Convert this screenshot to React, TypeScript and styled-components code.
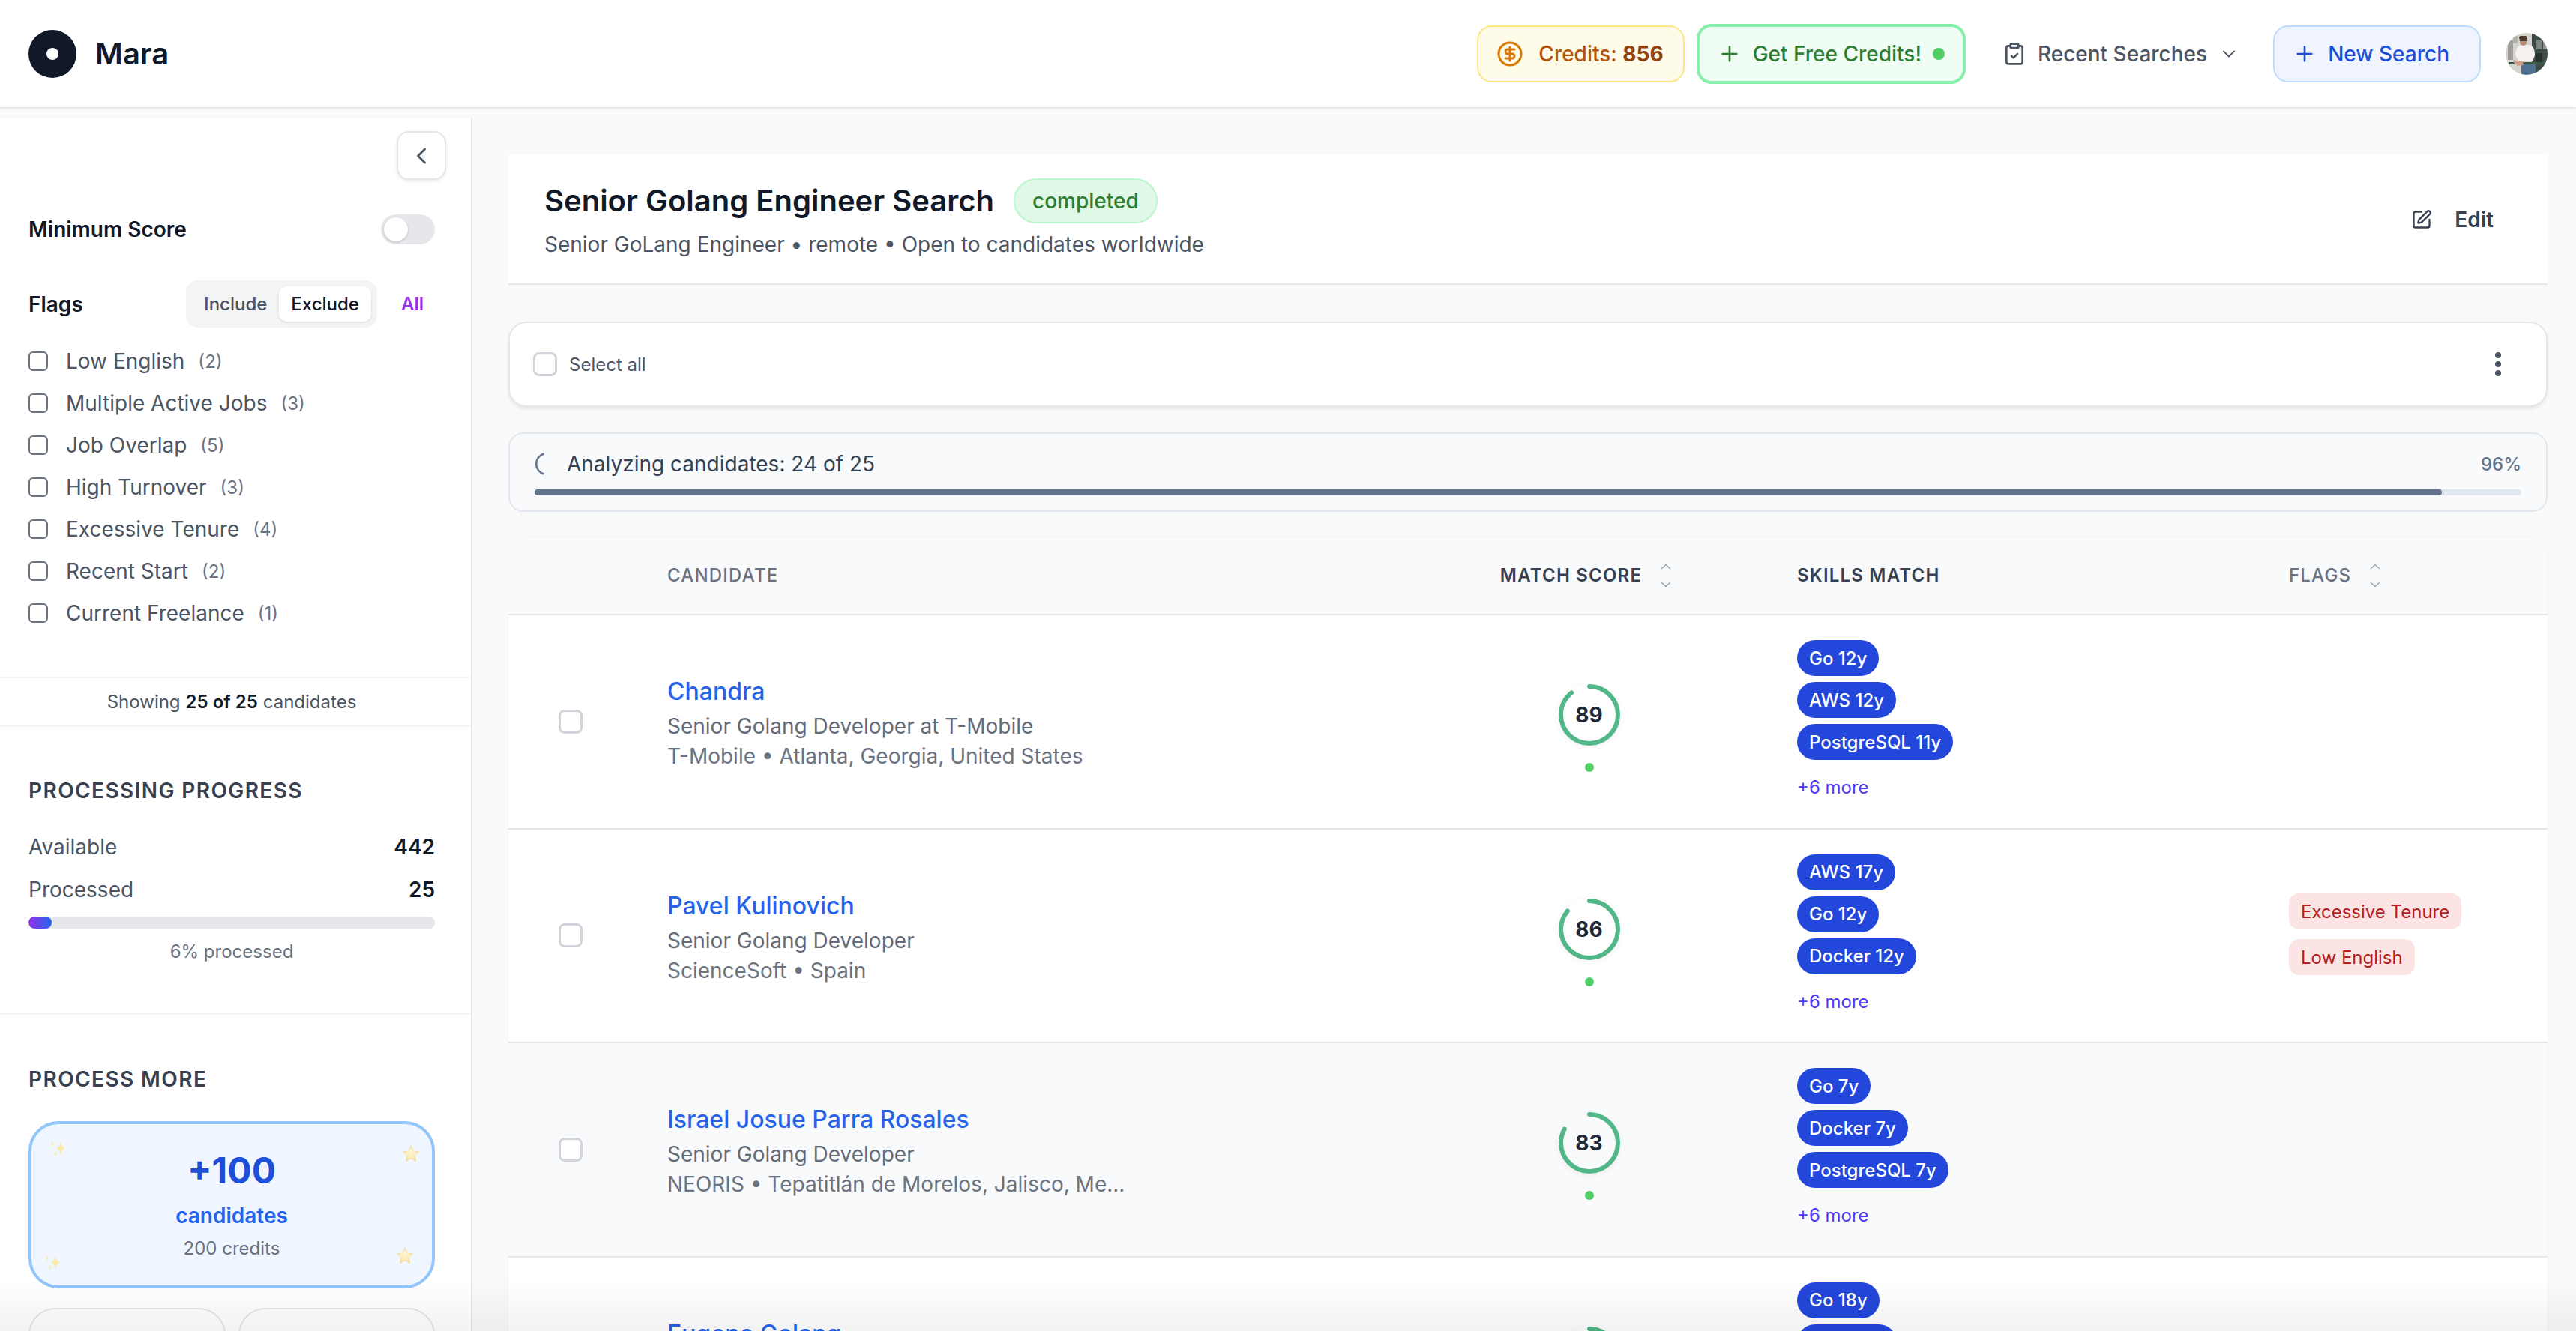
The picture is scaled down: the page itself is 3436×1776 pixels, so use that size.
import styled, { createGlobalStyle } from 'styled-components';
import { ChevronDown, ChevronLeft, CircleDollarSign, ClipboardCheck, Plus, SquarePen } from 'lucide-react';

const flagOptions = [
  { label: 'Low English', count: 2 },
  { label: 'Multiple Active Jobs', count: 3 },
  { label: 'Job Overlap', count: 5 },
  { label: 'High Turnover', count: 3 },
  { label: 'Excessive Tenure', count: 4 },
  { label: 'Recent Start', count: 2 },
  { label: 'Current Freelance', count: 1 },
];

const candidates = [
  {
    name: 'Chandra',
    role: 'Senior Golang Developer at T-Mobile',
    place: 'T-Mobile • Atlanta, Georgia, United States',
    score: 89,
    skills: ['Go 12y', 'AWS 12y', 'PostgreSQL 11y'],
    flags: [] as string[],
  },
  {
    name: 'Pavel Kulinovich',
    role: 'Senior Golang Developer',
    place: 'ScienceSoft • Spain',
    score: 86,
    skills: ['AWS 17y', 'Go 12y', 'Docker 12y'],
    flags: ['Excessive Tenure', 'Low English'],
  },
  {
    name: 'Israel Josue Parra Rosales',
    role: 'Senior Golang Developer',
    place: 'NEORIS • Tepatitlán de Morelos, Jalisco, Me...',
    score: 83,
    skills: ['Go 7y', 'Docker 7y', 'PostgreSQL 7y'],
    flags: [],
  },
  {
    name: 'Eugene Golang',
    role: 'Senior Golang Developer',
    place: 'Remote',
    score: 81,
    skills: ['Go 18y', 'AWS 14y', 'Docker 10y'],
    flags: [],
  },
];

function SortIcon() {
  return (
    <svg width="14" height="32" viewBox="0 0 14 32" fill="none" stroke="#9ca3af" strokeWidth="1.6" strokeLinecap="round" strokeLinejoin="round">
      <path d="M1.5 6.5 7 1.5l5.5 5" />
      <path d="M1.5 25.5 7 30.5l5.5-5" />
    </svg>
  );
}

function ScoreRing({ score }: { score: number }) {
  const radius = 38;
  const length = 2 * Math.PI * radius;
  return (
    <RingBox>
      <svg width="82" height="82" viewBox="0 0 82 82" fill="none">
        <circle
          cx="41"
          cy="41"
          r={radius}
          stroke="#52b788"
          strokeWidth="6"
          strokeLinecap="round"
          strokeDasharray={`${(length * score) / 100} ${length}`}
          transform="rotate(-90 41 41)"
        />
      </svg>
      <RingValue>{score}</RingValue>
    </RingBox>
  );
}

function Sparkles({ className }: { className?: string }) {
  return (
    <svg className={className} width="21" height="22" viewBox="0 0 21 22" fill="#fbe9a8">
      <path d="M14 .5c.6 6 2 8.800 6.500 10-4.500 1.200-5.900 4-6.500 10-.6-6-2-8.800-6.500-10 4.500-1.200 5.900-4 6.500-10Z" />
      <path d="M3 .5c.3 2.800.9 3.900 2.300 4.500C3.900 5.600 3.300 6.700 3 9.500 2.700 6.700 2.100 5.600.7 5 2.100 4.400 2.700 3.300 3 .5Z" />
      <path d="M7 12.500c.3 2.800.9 3.900 2.300 4.500-1.400.6-2 1.700-2.300 4.500-.3-2.800-.9-3.900-2.300-4.500 1.400-.6 2-1.700 2.300-4.500Z" />
    </svg>
  );
}

function Star({ className }: { className?: string }) {
  return (
    <svg className={className} width="24" height="23" viewBox="0 0 24 23">
      <defs>
        <radialGradient id="starFill" cx="50%" cy="42%" r="60%">
          <stop offset="0%" stopColor="#fdf6d8" />
          <stop offset="65%" stopColor="#fbe9ae" />
          <stop offset="100%" stopColor="#f1cf8a" />
        </radialGradient>
      </defs>
      <path
        d="M12 .8l3.300 7 7.500.9-5.500 5.200 1.500 7.600L12 17.800l-6.800 3.700 1.500-7.600L1.200 8.700l7.500-.9z"
        fill="url(#starFill)"
        stroke="#f4dca4"
        strokeWidth="0.8"
        strokeLinejoin="round"
      />
    </svg>
  );
}

function AvatarPhoto() {
  return (
    <Avatar viewBox="0 0 56 56" aria-label="User avatar">
      <defs>
        <filter id="soft">
          <feGaussianBlur stdDeviation="0.6" />
        </filter>
      </defs>
      <g filter="url(#soft)">
        <rect width="56" height="56" fill="#d6d4cf" />
        <rect x="3" y="10" width="7" height="26" fill="#9f9e96" />
        <rect x="10" y="2" width="6" height="12" fill="#b4b2aa" />
        <rect x="35" y="0" width="21" height="56" fill="#3e4b47" />
        <rect x="41" y="9" width="8" height="13" fill="#7a837f" />
        <rect x="41" y="27" width="8" height="12" fill="#2b302e" />
        <rect x="50" y="9" width="6" height="13" fill="#8d8f8a" />
        <rect x="21" y="42" width="19" height="14" fill="#4f6f90" />
        <path d="M13 30c0-8 3-13 8-14h10c6 1 8 6 8 14l-3 8H18z" fill="#f4f1ef" />
        <rect x="19" y="7" width="9" height="10" rx="4.500" fill="#b98b73" />
        <rect x="18" y="4" width="11" height="5" rx="2.500" fill="#4a3a30" />
        <rect x="19" y="9.500" width="9" height="1.400" fill="#3a3a3a" />
        <rect x="4" y="39" width="48" height="3" fill="#3b584c" />
        <path d="M11 36l12 2 1 5-8 1-5-4z" fill="#caa08a" />
      </g>
    </Avatar>
  );
}

export default function App() {
  return (
    <Page>
      <GlobalStyle />
      <Header>
        <Brand>
          <LogoMark>
            <LogoDot />
          </LogoMark>
          <BrandName>Mara</BrandName>
        </Brand>
        <HeaderActions>
          <CreditsPill>
            <CircleDollarSign size={36} color="#d97706" strokeWidth={2} />
            <span>
              Credits: <strong>856</strong>
            </span>
          </CreditsPill>
          <FreeCreditsPill>
            <Plus size={32} strokeWidth={2} />
            Get Free Credits!
            <LiveDot />
          </FreeCreditsPill>
          <RecentButton>
            <ClipboardCheck size={32} strokeWidth={2} />
            Recent Searches
            <ChevronDown size={28} strokeWidth={1.6} />
          </RecentButton>
          <NewSearchButton>
            <Plus size={32} strokeWidth={2} />
            New Search
          </NewSearchButton>
          <AvatarPhoto />
        </HeaderActions>
      </Header>

      <Body>
        <Sidebar>
          <CollapseRow>
            <CollapseButton>
              <ChevronLeft size={36} strokeWidth={2} />
            </CollapseButton>
          </CollapseRow>

          <ScoreRow>
            <FilterLabel>Minimum Score</FilterLabel>
            <Toggle>
              <ToggleKnob />
            </Toggle>
          </ScoreRow>

          <FlagsRow>
            <FilterLabel>Flags</FilterLabel>
            <Segment>
              <SegmentItem>Include</SegmentItem>
              <SegmentItem $active>Exclude</SegmentItem>
            </Segment>
            <AllLink>All</AllLink>
          </FlagsRow>

          <FlagList>
            {flagOptions.map((flag) => (
              <FlagOption key={flag.label}>
                <FlagCheck />
                <span>{flag.label}</span>
                <FlagCount>({flag.count})</FlagCount>
              </FlagOption>
            ))}
          </FlagList>

          <ShowingBar>
            Showing <strong>25 of 25</strong> candidates
          </ShowingBar>

          <ProgressSection>
            <SectionTitle>Processing Progress</SectionTitle>
            <StatRow>
              <span>Available</span>
              <strong>442</strong>
            </StatRow>
            <StatRow $tight>
              <span>Processed</span>
              <strong>25</strong>
            </StatRow>
            <ProcessTrack>
              <ProcessFill style={{ width: `${(25 / 442) * 100}%` }} />
            </ProcessTrack>
            <ProcessNote>6% processed</ProcessNote>
          </ProgressSection>

          <MoreSection>
            <SectionTitle>Process More</SectionTitle>
            <PackCard>
              <SparkTopLeft />
              <StarTopRight />
              <SparkBottomLeft />
              <StarBottomRight />
              <PackAmount>+100</PackAmount>
              <PackUnit>candidates</PackUnit>
              <PackCost>200 credits</PackCost>
            </PackCard>
            <PackGrid>
              <SmallPack />
              <SmallPack />
            </PackGrid>
          </MoreSection>
        </Sidebar>

        <Main>
          <TitleCard>
            <div>
              <TitleRow>
                <Title>Senior Golang Engineer Search</Title>
                <StatusBadge>completed</StatusBadge>
              </TitleRow>
              <Subtitle>Senior GoLang Engineer • remote • Open to candidates worldwide</Subtitle>
            </div>
            <EditButton>
              <SquarePen size={28} strokeWidth={2} />
              Edit
            </EditButton>
          </TitleCard>

          <SelectCard>
            <SelectAll>
              <BigCheck />
              Select all
            </SelectAll>
            <svg width="10" height="36" viewBox="0 0 10 36" fill="#4b5563">
              <circle cx="5" cy="6" r="4" />
              <circle cx="5" cy="18" r="4" />
              <circle cx="5" cy="30" r="4" />
            </svg>
          </SelectCard>

          <AnalyzeCard>
            <AnalyzeTop>
              <SpinnerArc viewBox="0 0 32 32" fill="none" stroke="#64748b" strokeWidth="2.600">
                <path d="M12.400 2.500A14 14 0 0 0 12.400 29.500" />
              </SpinnerArc>
              <AnalyzeText>Analyzing candidates: 24 of 25</AnalyzeText>
              <AnalyzePercent>96%</AnalyzePercent>
            </AnalyzeTop>
            <AnalyzeTrack>
              <AnalyzeFill style={{ width: '96%' }} />
            </AnalyzeTrack>
          </AnalyzeCard>

          <Table>
            <TableHead>
              <span />
              <HeadCell>Candidate</HeadCell>
              <ScoreHead $strong>
                Match Score
                <SortIcon />
              </ScoreHead>
              <HeadCell $strong>Skills Match</HeadCell>
              <FlagsHead>
                Flags
                <SortIcon />
              </FlagsHead>
            </TableHead>
            {candidates.map((person, index) => (
              <Row key={person.name} $shaded={index === 2}>
                <CheckCell>
                  <BigCheck />
                </CheckCell>
                <CandidateCell>
                  <CandidateName>{person.name}</CandidateName>
                  <CandidateRole>{person.role}</CandidateRole>
                  <CandidateMeta>{person.place}</CandidateMeta>
                </CandidateCell>
                <ScoreCell>
                  <ScoreRing score={person.score} />
                  <ScoreDot />
                </ScoreCell>
                <SkillsCell>
                  {person.skills.map((skill) => (
                    <SkillChip key={skill}>{skill}</SkillChip>
                  ))}
                  <MoreLink>+6 more</MoreLink>
                </SkillsCell>
                <FlagsCell>
                  {person.flags.map((flag) => (
                    <FlagChip key={flag}>{flag}</FlagChip>
                  ))}
                </FlagsCell>
              </Row>
            ))}
          </Table>
        </Main>
      </Body>
      <BottomFade />
    </Page>
  );
}

const GlobalStyle = createGlobalStyle`
  html, body {
    margin: 0;
    height: 100%;
    overflow: hidden;
    background: #fafafa;
  }
  body {
    font-family: 'Inter', 'Liberation Sans', sans-serif;
    -webkit-font-smoothing: antialiased;
  }
  * {
    box-sizing: border-box;
  }
  button {
    font-family: inherit;
  }
`;

const Page = styled.div`
  height: 100vh;
  display: flex;
  flex-direction: column;
  overflow: hidden;
`;

const Header = styled.header`
  position: relative;
  z-index: 2;
  flex: none;
  height: 143px;
  padding: 0 38px;
  display: flex;
  align-items: center;
  justify-content: space-between;
  background: #fff;
  box-shadow: 0 2px 3px rgba(0, 0, 0, 0.1);
`;

const Brand = styled.div`
  display: flex;
  align-items: center;
  gap: 25px;
`;

const LogoMark = styled.div`
  width: 64px;
  height: 64px;
  border-radius: 50%;
  background: #111827;
  display: flex;
  align-items: center;
  justify-content: center;
`;

const LogoDot = styled.div`
  width: 16px;
  height: 16px;
  border-radius: 50%;
  background: #fff;
`;

const BrandName = styled.div`
  font-size: 40px;
  font-weight: 600;
  color: #111827;
`;

const HeaderActions = styled.div`
  display: flex;
  align-items: center;
`;

const Pill = styled.button`
  display: flex;
  align-items: center;
  font-size: 28px;
  font-weight: 500;
  white-space: nowrap;
  border-style: solid;
`;

const CreditsPill = styled(Pill)`
  height: 76px;
  padding: 0 26px 0 24px;
  gap: 20px;
  border-width: 2px;
  border-color: #fde68a;
  border-radius: 20px;
  background: #fefce8;
  color: #b45309;

  strong {
    font-weight: 700;
    color: #92400e;
  }
`;

const FreeCreditsPill = styled(Pill)`
  height: 80px;
  margin-left: 16px;
  padding: 0 24px;
  gap: 15px;
  border-width: 4px;
  border-color: #86efac;
  border-radius: 20px;
  background: #f0fdf4;
  color: #2e7d32;
`;

const LiveDot = styled.span`
  width: 16px;
  height: 16px;
  border-radius: 50%;
  background: #51cf66;
`;

const RecentButton = styled(Pill)`
  height: 76px;
  padding: 0 45px 0 49px;
  gap: 15px;
  border: none;
  background: transparent;
  color: #4b5563;
`;

const NewSearchButton = styled(Pill)`
  height: 76px;
  padding: 0 40px 0 24px;
  gap: 15px;
  border-width: 2px;
  border-color: #bfdbfe;
  border-radius: 20px;
  background: #eff4ff;
  color: #1d4ed8;
`;

const Avatar = styled.svg`
  width: 56px;
  height: 56px;
  margin-left: 33px;
  border-radius: 50%;
`;

const Body = styled.div`
  flex: 1;
  min-height: 0;
  padding-top: 15px;
  display: flex;
  background: #fafafa;
`;

const Sidebar = styled.aside`
  flex: none;
  width: 630px;
  background: #fff;
  border-right: 2px solid #e5e7eb;
  overflow: hidden;
`;

const CollapseRow = styled.div`
  padding: 17px 33px 0 0;
  display: flex;
  justify-content: flex-end;
`;

const CollapseButton = styled.button`
  width: 66px;
  height: 65px;
  padding: 0;
  display: flex;
  align-items: center;
  justify-content: center;
  border: 2px solid #e5e7eb;
  border-radius: 16px;
  background: #fff;
  color: #4b5563;
  box-shadow: 0 2px 4px rgba(0, 0, 0, 0.08);
`;

const ScoreRow = styled.div`
  margin-top: 46px;
  padding: 0 48px 0 38px;
  display: flex;
  align-items: center;
  justify-content: space-between;
`;

const FilterLabel = styled.div`
  font-size: 28px;
  line-height: 40px;
  font-weight: 600;
  color: #111827;
`;

const Toggle = styled.div`
  width: 72px;
  height: 40px;
  padding: 4px;
  border-radius: 20px;
  background: #e5e7eb;
`;

const ToggleKnob = styled.div`
  width: 32px;
  height: 32px;
  border-radius: 50%;
  background: #fff;
  box-shadow: 0 1px 3px rgba(0, 0, 0, 0.2);
`;

const FlagsRow = styled.div`
  margin-top: 48px;
  padding-left: 38px;
  display: flex;
  align-items: center;
`;

const Segment = styled.div`
  margin-left: auto;
  height: 63px;
  padding: 8px;
  display: flex;
  border-radius: 16px;
  background: #f3f4f6;
`;

const SegmentItem = styled.div<{ $active?: boolean }>`
  padding: 0 16px;
  display: flex;
  align-items: center;
  font-size: 24px;
  font-weight: 500;
  border-radius: 10px;
  color: ${(p) => (p.$active ? '#111827' : '#4b5563')};
  background: ${(p) => (p.$active ? '#fff' : 'transparent')};
  box-shadow: ${(p) => (p.$active ? '0 1px 3px rgba(0, 0, 0, 0.12)' : 'none')};
`;

const AllLink = styled.div`
  margin: 0 63px 0 32px;
  font-size: 24px;
  font-weight: 600;
  color: #9333ea;
`;

const FlagList = styled.div`
  margin-top: 17px;
  padding-left: 38px;
`;

const FlagOption = styled.div`
  height: 56px;
  display: flex;
  align-items: center;
  font-size: 28px;
  color: #4b5563;
`;

const FlagCheck = styled.span`
  width: 26px;
  height: 26px;
  margin-right: 24px;
  border: 2px solid #6b7280;
  border-radius: 6px;
`;

const FlagCount = styled.span`
  margin-left: 18px;
  font-size: 24px;
  color: #6b7280;
`;

const ShowingBar = styled.div`
  margin-top: 57px;
  height: 67px;
  padding-right: 10px;
  display: flex;
  align-items: center;
  justify-content: center;
  gap: 7px;
  font-size: 24px;
  color: #4b5563;
  border-top: 2px solid #f3f4f6;
  border-bottom: 2px solid #f3f4f6;

  strong {
    font-weight: 600;
    color: #111827;
  }
`;

const ProgressSection = styled.section`
  padding: 65px 48px 66px 38px;
  border-bottom: 2px solid #f3f4f6;
`;

const SectionTitle = styled.h3`
  margin: 0;
  font-size: 28px;
  line-height: 40px;
  font-weight: 600;
  letter-spacing: 0.05em;
  text-transform: uppercase;
  color: #374151;
`;

const StatRow = styled.div<{ $tight?: boolean }>`
  margin-top: ${(p) => (p.$tight ? '17px' : '35px')};
  display: flex;
  justify-content: space-between;
  font-size: 28px;
  line-height: 40px;
  color: #4b5563;

  strong {
    font-weight: 600;
    color: #111827;
  }
`;

const ProcessTrack = styled.div`
  margin-top: 16px;
  height: 16px;
  border-radius: 8px;
  background: #e5e7eb;
  overflow: hidden;
`;

const ProcessFill = styled.div`
  height: 100%;
  border-radius: 8px;
  background: linear-gradient(90deg, #9333ea, #2563eb);
`;

const ProcessNote = styled.div`
  margin-top: 15px;
  font-size: 24px;
  line-height: 32px;
  text-align: center;
  color: #6b7280;
`;

const MoreSection = styled.section`
  padding: 66px 48px 0 38px;
`;

const PackCard = styled.div`
  position: relative;
  margin-top: 36px;
  height: 223px;
  padding-top: 34px;
  display: flex;
  flex-direction: column;
  align-items: center;
  border: 4px solid #93c5fd;
  border-radius: 40px;
  background: #eff6ff;
`;

const SparkTopLeft = styled(Sparkles)`
  position: absolute;
  left: 25px;
  top: 22px;
`;

const SparkBottomLeft = styled(Sparkles)`
  position: absolute;
  left: 18px;
  top: 174px;
`;

const StarTopRight = styled(Star)`
  position: absolute;
  left: 494px;
  top: 28px;
`;

const StarBottomRight = styled(Star)`
  position: absolute;
  left: 486px;
  top: 164px;
`;

const PackAmount = styled.div`
  font-size: 48px;
  line-height: 56px;
  font-weight: 700;
  color: #1d4ed8;
`;

const PackUnit = styled.div`
  margin-top: 12px;
  font-size: 28px;
  line-height: 40px;
  font-weight: 600;
  color: #2563eb;
`;

const PackCost = styled.div`
  margin-top: 8px;
  font-size: 24px;
  line-height: 32px;
  color: #6b7280;
`;

const PackGrid = styled.div`
  margin-top: 26px;
  display: grid;
  grid-template-columns: 1fr 1fr;
  gap: 17px;
`;

const SmallPack = styled.div`
  height: 223px;
  border: 2px solid #e5e7eb;
  border-radius: 36px;
  background: #fff;
`;

const Main = styled.main`
  flex: 1;
  min-width: 0;
  padding: 48px 38px 0 48px;
  overflow: hidden;
`;

const TitleCard = styled.div`
  height: 174px;
  padding: 32px 72px 0 48px;
  display: flex;
  align-items: flex-start;
  justify-content: space-between;
  background: #fff;
  border-bottom: 2px solid #e5e7eb;
`;

const TitleRow = styled.div`
  display: flex;
  align-items: center;
  gap: 26px;
`;

const Title = styled.h1`
  margin: 0;
  font-size: 40px;
  line-height: 60px;
  font-weight: 600;
  color: #111827;
`;

const StatusBadge = styled.span`
  height: 60px;
  padding: 0 23px;
  display: flex;
  align-items: center;
  font-size: 28px;
  font-weight: 500;
  color: #2e7d32;
  border: 2px solid #bbf7d0;
  border-radius: 30px;
  background: #e0f8e6;
`;

const Subtitle = styled.p`
  margin: 8px 0 0;
  font-size: 28px;
  line-height: 40px;
  color: #4b5563;
`;

const EditButton = styled.button`
  margin-top: 35px;
  padding: 0;
  display: flex;
  align-items: center;
  gap: 30px;
  font-size: 28px;
  line-height: 40px;
  font-weight: 600;
  color: #374151;
  border: none;
  background: transparent;
`;

const SelectCard = styled.div`
  margin-top: 49px;
  height: 114px;
  padding: 0 59px 0 31px;
  display: flex;
  align-items: center;
  justify-content: space-between;
  background: #fff;
  border: 2px solid #e5e7eb;
  border-radius: 24px;
  box-shadow: 0 3px 5px rgba(0, 0, 0, 0.08);
`;

const SelectAll = styled.div`
  display: flex;
  align-items: center;
  gap: 16px;
  font-size: 24px;
  color: #4b5563;
`;

const BigCheck = styled.span`
  display: block;
  width: 32px;
  height: 32px;
  border: 3px solid #d1d5db;
  border-radius: 8px;
  background: #fff;
`;

const AnalyzeCard = styled.div`
  margin-top: 34px;
  height: 106px;
  padding: 20px 33px 0;
  background: #f8fafc;
  border: 2px solid #e2e8f0;
  border-radius: 20px;
`;

const AnalyzeTop = styled.div`
  display: flex;
  align-items: center;
  height: 40px;
`;

const SpinnerArc = styled.svg`
  flex: none;
  width: 32px;
  height: 32px;
  margin-right: 11px;
`;

const AnalyzeText = styled.span`
  font-size: 28px;
  font-weight: 400;
  color: #334155;
`;

const AnalyzePercent = styled.span`
  margin-left: auto;
  font-size: 24px;
  font-weight: 500;
  color: #64748b;
`;

const AnalyzeTrack = styled.div`
  margin-top: 14px;
  height: 8px;
  border-radius: 4px;
  background: #e2e8f0;
`;

const AnalyzeFill = styled.div`
  height: 100%;
  border-radius: 4px;
  background: #64748b;
`;

const columns = '212px 952px 555px 656px 1fr';

const Table = styled.div`
  margin-top: 33px;
  background: #fff;
  border-radius: 24px 24px 0 0;
  overflow: hidden;
  box-shadow: 0 0 0 1px #f3f4f6;
`;

const TableHead = styled.div`
  height: 105px;
  display: grid;
  grid-template-columns: ${columns};
  align-items: center;
  background: #f9fafb;
  border-bottom: 2px solid #e5e7eb;
`;

const HeadCell = styled.div<{ $strong?: boolean }>`
  display: flex;
  align-items: center;
  font-size: 24px;
  font-weight: ${(p) => (p.$strong ? 600 : 500)};
  letter-spacing: 0.05em;
  text-transform: uppercase;
  color: ${(p) => (p.$strong ? '#374151' : '#6b7280')};
`;

const ScoreHead = styled(HeadCell)`
  justify-content: center;
  gap: 25px;
  padding-right: 9px;
`;

const FlagsHead = styled(HeadCell)`
  gap: 25px;
`;

const Row = styled.div<{ $shaded?: boolean }>`
  height: 285.5px;
  display: grid;
  grid-template-columns: ${columns};
  background: ${(p) => (p.$shaded ? '#f9fafb' : '#fff')};
  border-bottom: 2px solid #e5e7eb;
`;

const CheckCell = styled.div`
  padding-left: 67px;
  display: flex;
  align-items: center;
`;

const CandidateCell = styled.div`
  padding-top: 2px;
  display: flex;
  flex-direction: column;
  justify-content: center;
`;

const CandidateName = styled.a`
  font-size: 32px;
  line-height: 50px;
  font-weight: 500;
  color: #2563eb;
`;

const CandidateRole = styled.div`
  margin-top: 1px;
  font-size: 28px;
  line-height: 40px;
  color: #636b78;
`;

const CandidateMeta = styled.div`
  font-size: 28px;
  line-height: 40px;
  color: #6b7280;
`;

const ScoreCell = styled.div`
  padding-top: 92px;
  display: flex;
  flex-direction: column;
  align-items: center;
`;

const RingBox = styled.div`
  position: relative;
  width: 82px;
  height: 82px;
  border-radius: 50%;
  box-shadow: 0 2px 8px rgba(0, 0, 0, 0.06);
`;

const RingValue = styled.div`
  position: absolute;
  inset: 0;
  display: flex;
  align-items: center;
  justify-content: center;
  font-size: 28px;
  font-weight: 700;
  color: #1f2937;
`;

const ScoreDot = styled.span`
  margin-top: 23px;
  width: 12px;
  height: 12px;
  border-radius: 50%;
  background: #51cf66;
`;

const SkillsCell = styled.div`
  padding-top: 33px;
  display: flex;
  flex-direction: column;
  align-items: flex-start;
  gap: 8px;
`;

const SkillChip = styled.span`
  height: 48px;
  padding: 0 16px;
  display: flex;
  align-items: center;
  font-size: 24px;
  font-weight: 500;
  color: #fff;
  border-radius: 24px;
  background: #2447db;
`;

const MoreLink = styled.span`
  margin-top: 11px;
  font-size: 24px;
  line-height: 36px;
  color: #4f39f6;
`;

const FlagsCell = styled.div`
  padding-bottom: 3px;
  display: flex;
  flex-direction: column;
  align-items: flex-start;
  justify-content: center;
  gap: 13px;
`;

const FlagChip = styled.span`
  height: 48px;
  padding: 0 16px;
  display: flex;
  align-items: center;
  font-size: 24px;
  color: #b91c1c;
  border-radius: 14px;
  background: #fce4e4;
`;

const BottomFade = styled.div`
  position: fixed;
  left: 0;
  right: 0;
  bottom: 0;
  z-index: 3;
  height: 70px;
  pointer-events: none;
  background: linear-gradient(180deg, rgba(0, 0, 0, 0), rgba(0, 0, 0, 0.05));
`;
